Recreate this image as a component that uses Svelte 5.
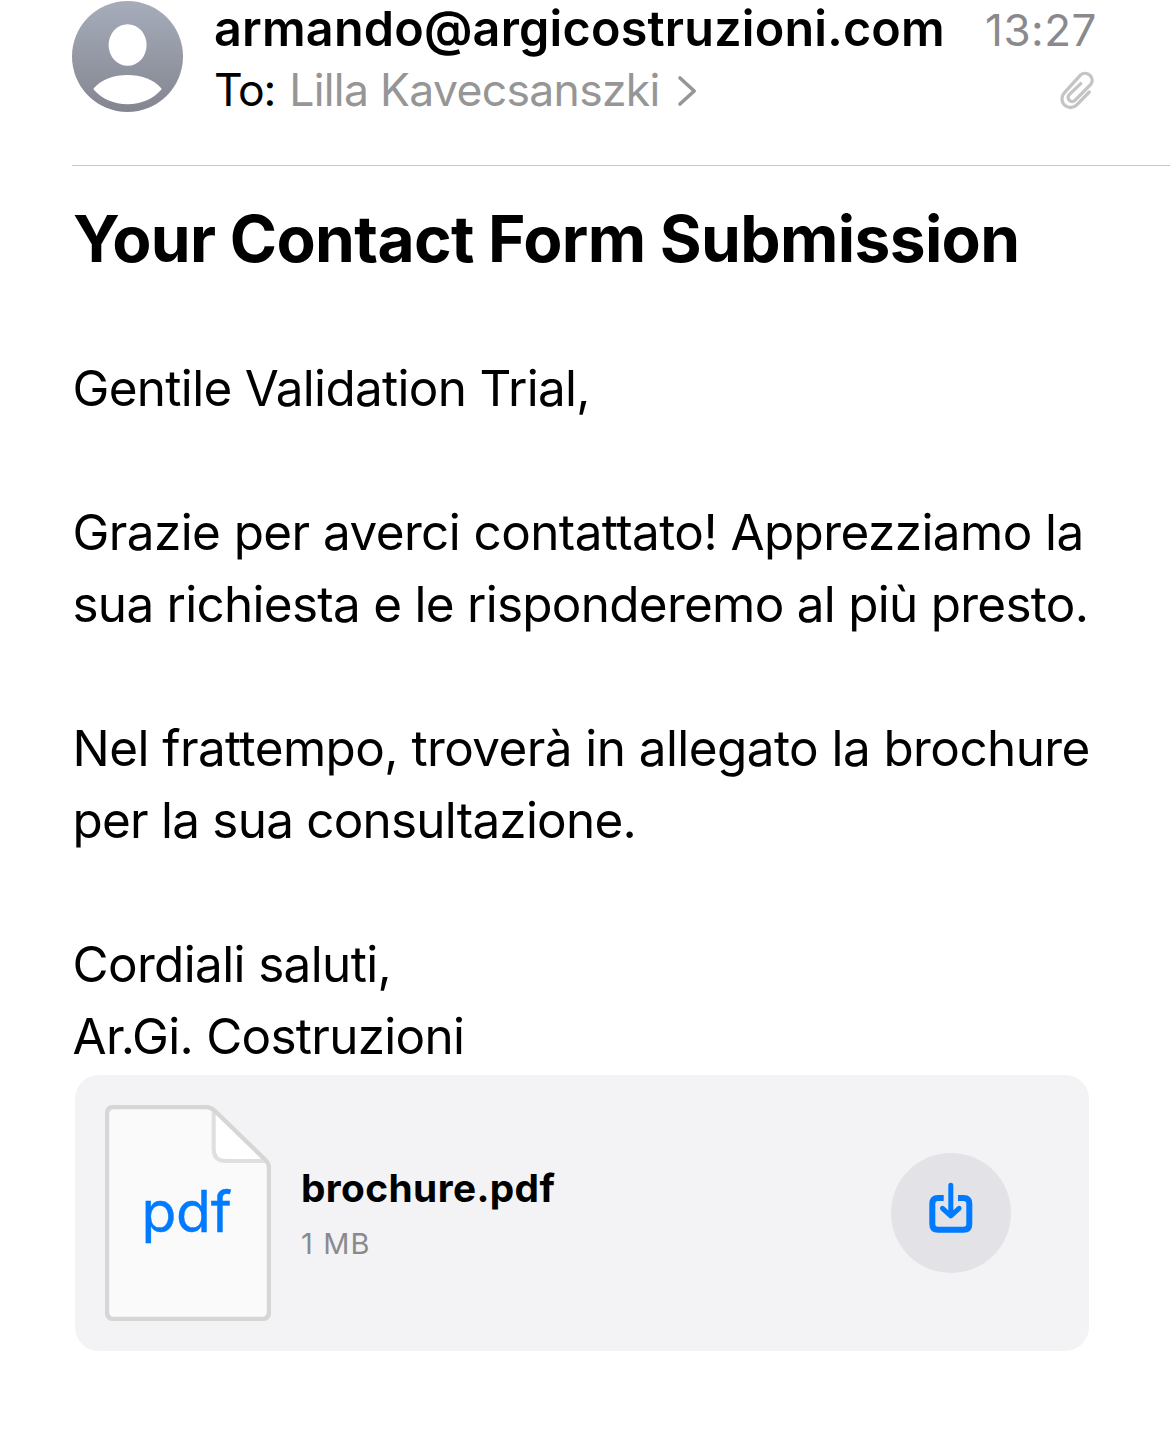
<script>
  const paragraphs = [
    [{ text: 'Gentile Validation Trial,', tracking: -0.66 }],
    [
      { text: 'Grazie per averci contattato! Apprezziamo la', tracking: -0.56 },
      { text: 'sua richiesta e le risponderemo al più presto.', tracking: -0.7 }
    ],
    [
      { text: 'Nel frattempo, troverà in allegato la brochure', tracking: -0.55 },
      { text: 'per la sua consultazione.', tracking: -0.75 }
    ],
    [
      { text: 'Cordiali saluti,', tracking: -0.62 },
      { text: 'Ar.Gi. Costruzioni', tracking: -0.7 }
    ]
  ];
</script>

<main class="mail">
  <header class="header">
    <svg class="avatar" viewBox="0 0 111 111" aria-hidden="true">
      <defs>
        <linearGradient id="avatar-fill" x1="0" y1="0" x2="0" y2="1">
          <stop offset="0" stop-color="#a6acbb" />
          <stop offset="1" stop-color="#83868f" />
        </linearGradient>
      </defs>
      <circle cx="55.5" cy="55.5" r="55.5" fill="url(#avatar-fill)" />
      <ellipse cx="55.6" cy="44" rx="19" ry="20.8" fill="#fff" />
      <path d="M21.8 87.2C30 78.2 42 74 55.5 74S81 78.2 89.3 87.2Q89.9 88 89.2 88.8C81 98 69 103.3 55.5 103.3S30 98 21.9 88.8Q21.2 88 21.8 87.2Z" fill="#fff" />
    </svg>
    <div class="people">
      <div class="sender">armando@argicostruzioni.com</div>
      <div class="recipient">
        <span class="to">To:</span>
        <span class="name">Lilla Kavecsanszki</span>
        <svg class="chevron" viewBox="0 0 22 34" aria-hidden="true">
          <path d="M4 4L18.2 17L4 30" />
        </svg>
      </div>
    </div>
    <div class="meta">
      <time class="time">13:27</time>
      <svg class="clip" viewBox="0 0 40 42" aria-hidden="true">
        <path d="M31.3 23L18.8 35.8A8.6 8.6 0 0 1 6.3 23.9L22.9 5.6A7.1 7.1 0 0 1 33 15.2L17.2 31.2A4.1 4.1 0 0 1 11.2 25.6L22.7 14.6" />
      </svg>
    </div>
  </header>

  <h1 class="subject">Your Contact Form Submission</h1>

  <article class="body">
    {#each paragraphs as lines}
      <p>
        {#each lines as line}
          <span class="line" style="letter-spacing: {line.tracking}px">{line.text}</span>
        {/each}
      </p>
    {/each}
  </article>

  <section class="attachment">
    <svg class="file" viewBox="0 0 166 216" aria-hidden="true">
      <path d="M9 2H101Q106 2 110 6L160.5 55Q164 58.5 164 63V207Q164 214 157 214H9Q2 214 2 207V9Q2 2 9 2Z" fill="#fafafa" />
      <path d="M108.7 5V44Q108.7 56 121 56H161Z" fill="#fff" />
      <path d="M108.7 5V44Q108.7 56 121 56H161" fill="none" stroke="#dfdfe0" stroke-width="4" />
      <path d="M9 2H101Q106 2 110 6L160.5 55Q164 58.5 164 63V207Q164 214 157 214H9Q2 214 2 207V9Q2 2 9 2Z" fill="none" stroke="#d6d6d7" stroke-width="4.4" />
      <text class="ext" x="36.5" y="127">pdf</text>
    </svg>
    <div class="details">
      <div class="filename">brochure.pdf</div>
      <div class="size">1 MB</div>
    </div>
    <button class="download" aria-label="Download">
      <svg viewBox="0 0 50 56" aria-hidden="true">
        <path class="tray" d="M17.7 18H12Q6.3 18 6.3 23.7V44Q6.3 49.7 12 49.7H37.6Q43.3 49.7 43.3 44V23.7Q43.3 18 37.6 18H32" />
        <path class="arrow" d="M24.8 5.2V35.5M16.5 28.3L24.8 36L33.1 28.3" />
      </svg>
    </button>
  </section>
</main>

<style>
  :global(body) {
    margin: 0;
    background: #fff;
  }

  .mail {
    box-sizing: border-box;
    width: 1170px;
    height: 1436px;
    overflow: hidden;
    padding-left: 72px;
    color: #000;
    font-family: Inter, 'Liberation Sans', sans-serif;
    white-space: nowrap;
  }

  .header {
    display: flex;
    box-sizing: border-box;
    height: 166px;
    padding-right: 73px;
    border-bottom: 1px solid #c6c6c8;
  }

  .avatar {
    flex: none;
    width: 111px;
    height: 111px;
    margin: 1px 31px 0 0;
  }

  .people {
    flex: 1;
  }

  .sender {
    font-size: 48.5px;
    font-weight: 600;
    line-height: 58px;
    letter-spacing: 0.2px;
  }

  .recipient {
    display: flex;
    align-items: center;
    margin-top: 2px;
    font-size: 44.5px;
    line-height: 60px;
  }

  .to {
    margin-right: 14px;
    letter-spacing: -1.2px;
  }

  .name {
    color: #969696;
    letter-spacing: -0.68px;
  }

  .chevron {
    width: 22px;
    height: 34px;
    margin: 2px 0 0 16.5px;
    fill: none;
    stroke: #969696;
    stroke-width: 3.6;
    stroke-linecap: round;
    stroke-linejoin: round;
  }

  .meta {
    display: flex;
    flex-direction: column;
    align-items: flex-end;
  }

  .time {
    color: #8a8a8e;
    font-size: 44px;
    line-height: 60px;
    letter-spacing: 0.5px;
  }

  .clip {
    width: 40px;
    height: 42px;
    margin: 9px -1px 0 0;
    fill: none;
    stroke: #c4c4c6;
    stroke-width: 3.3;
    stroke-linecap: round;
    stroke-linejoin: round;
  }

  .subject {
    margin: 34px 0 74px 1px;
    font-size: 64px;
    font-weight: 700;
    line-height: 78px;
    letter-spacing: -0.62px;
    word-spacing: -0.3px;
  }

  .body {
    margin-left: 0.5px;
    font-size: 49.4px;
    line-height: 72px;
  }

  .body p {
    margin: 0 0 72px;
  }

  .body p:last-child {
    margin: 0;
  }

  .line {
    display: block;
  }

  .attachment {
    display: flex;
    align-items: center;
    box-sizing: border-box;
    width: 1014px;
    height: 276px;
    margin: 3px 0 0 3px;
    padding: 0 78px 0 30px;
    border-radius: 24px;
    background: #f3f3f6;
  }

  .file {
    flex: none;
    width: 166px;
    height: 216px;
    margin-right: 30px;
  }

  .ext {
    fill: #007aff;
    stroke: #007aff;
    stroke-width: 0.4;
    font-size: 57px;
    letter-spacing: -0.3px;
  }

  .details {
    flex: 1;
  }

  .filename {
    font-size: 38.8px;
    font-weight: 700;
    line-height: 50px;
    letter-spacing: 0.4px;
  }

  .size {
    margin: 11px 0 -1px;
    color: #8a8a8e;
    font-size: 29px;
    line-height: 40px;
    letter-spacing: 1.1px;
  }

  .download {
    display: flex;
    justify-content: center;
    width: 120px;
    height: 120px;
    padding: 27px 0 0;
    border: 0;
    border-radius: 50%;
    background: #e3e3e7;
  }

  .download svg {
    width: 50px;
    height: 56px;
    fill: none;
    stroke: #007aff;
  }

  .tray {
    stroke-width: 6;
  }

  .arrow {
    stroke-width: 5;
    stroke-linecap: round;
    stroke-linejoin: round;
  }
</style>
